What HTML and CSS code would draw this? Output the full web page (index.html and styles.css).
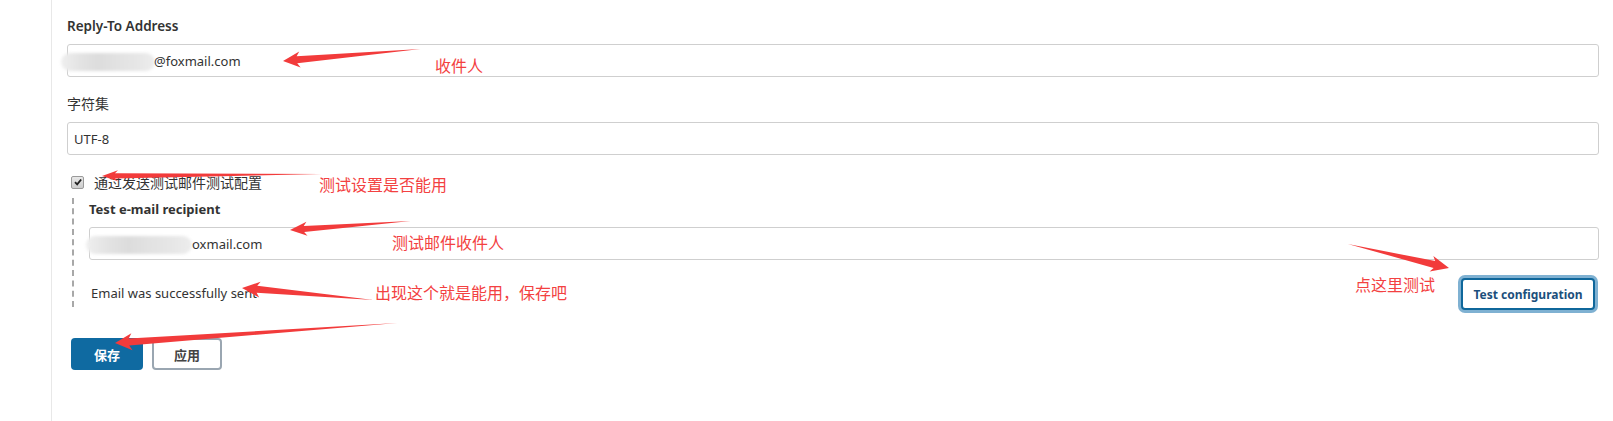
FILE: index.html
```html
<!DOCTYPE html>
<html lang="zh">
<head>
<meta charset="utf-8">
<title>Mail config</title>
<link rel="stylesheet" href="styles.css">
</head>
<body>
<div class="page">
  <aside class="sidebar"></aside>
  <main class="main">
    <div class="field">
      <div class="label">Reply-To Address</div>
      <div class="input"><span class="blur blur-a"></span><span class="val">@foxmail.com</span></div>
    </div>
    <div class="field">
      <div class="label label-cn">字符集</div>
      <div class="input"><span class="val">UTF-8</span></div>
    </div>
    <div class="check-row">
      <span class="checkbox"><svg viewBox="0 0 12 12" width="12" height="12"><path d="M2.4 6.2 L5 8.8 L9.8 3" fill="none" stroke="#222" stroke-width="2.2"/></svg></span>
      <span class="check-label">通过发送测试邮件测试配置</span>
    </div>
    <div class="nested">
      <div class="label label-bold">Test e-mail recipient</div>
      <div class="input"><span class="blur blur-b"></span><span class="val">oxmail.com</span></div>
      <div class="result-row">
        <span class="result">Email was successfully sent</span>
        <button class="btn-test">Test configuration</button>
      </div>
    </div>
    <div class="actions">
      <button class="btn btn-primary">保存</button>
      <button class="btn btn-secondary">应用</button>
    </div>
  </main>

  <div class="overlay">
    <svg class="arrows" width="1613" height="421" viewBox="0 0 1613 421">
      <g fill="#f23b3b">
        <polygon transform="translate(283 61) rotate(-5)" points="0,0 17,-8 14,-3.5 138,0 14,3.5 17,8"/>
        <polygon transform="translate(102 176) rotate(-0.5)" points="0,0 16,-5.5 13,-2.6 220,0 13,2.6 16,5.5"/>
        <polygon transform="translate(290 230) rotate(-4.3)" points="0,0 17,-7 14,-3 121,0 14,3 17,7"/>
        <polygon transform="translate(242 288) rotate(5.2)" points="0,0 18,-8 15,-3.5 132,0 15,3.5 18,8"/>
        <polygon transform="translate(115 343) rotate(-4.06)" points="0,0 17,-8.5 14,-3.5 283,0 14,3.5 17,8.5"/>
        <polygon transform="translate(1449 268) rotate(-166.6)" points="0,0 18,-8 15,-3.5 104,0 15,3.5 18,8"/>
      </g>
    </svg>
    <span class="note note-1">收件人</span>
    <span class="note note-2">测试设置是否能用</span>
    <span class="note note-3">测试邮件收件人</span>
    <span class="note note-4">出现这个就是能用，保存吧</span>
    <span class="note note-5">点这里测试</span>
  </div>
</div>
</body>
</html>
```

FILE: styles.css
```css
* { box-sizing: border-box; }

html, body {
  margin: 0;
  padding: 0;
  background: #fff;
}

body {
  font-family: "Noto Sans", "Noto Sans CJK SC", sans-serif;
  font-size: 13px;
  color: #333;
}

.page {
  position: relative;
  display: flex;
  width: 1613px;
  height: 421px;
  overflow: hidden;
}

.sidebar {
  width: 52px;
  flex: none;
  border-right: 1px solid #e8e8e8;
}

.main {
  flex: 1;
  padding: 16px 14px 0 15px;
}

.field {
  margin-bottom: 17px;
}

.label {
  font-size: 13.5px;
  line-height: 20px;
  font-weight: 600;
  color: #333;
  margin-bottom: 8px;
}

.label-cn {
  font-weight: 400;
  font-size: 14px;
}

.label-bold {
  font-size: 13px;
  font-weight: 700;
  margin-bottom: 8px;
}

.input {
  position: relative;
  height: 33px;
  border: 1px solid #cfcfcf;
  border-radius: 3px;
  display: flex;
  align-items: center;
  padding-left: 6px;
  font-size: 13px;
  color: #333;
  background: #fff;
}

.val {
  position: relative;
}

.blur {
  position: absolute;
  top: 8px;
  height: 18px;
  border-radius: 9px;
  filter: blur(1.5px);
  background: linear-gradient(90deg, #efefef 0%, #e3e3e3 20%, #dcdcdc 40%, #e2e2e2 60%, #e6e6e6 80%, #ededed 100%);
}

.blur-a {
  left: -7px;
  width: 94px;
}

.blur-a + .val {
  margin-left: 80px;
}

.blur-b {
  left: -4px;
  width: 106px;
}

.blur-b + .val {
  margin-left: 96px;
}

.check-row {
  display: flex;
  align-items: center;
  height: 20px;
  margin-top: 17px;
  padding-left: 4px;
}

.checkbox {
  width: 13px;
  height: 13px;
  border: 1px solid #9a9a9a;
  border-radius: 2px;
  background: linear-gradient(#e8e8e8, #cdcdcd);
  display: flex;
  align-items: center;
  justify-content: center;
}

.checkbox svg {
  width: 10px;
  height: 10px;
}

.check-label {
  margin-left: 10px;
  font-size: 14px;
  color: #333;
}

.nested {
  margin-top: 6px;
  margin-left: 5px;
  padding: 1px 0 0 15px;
  border-left: 2px dashed #a8a8a8;
  height: 109px;
}

.result-row {
  display: flex;
  align-items: center;
  justify-content: space-between;
  margin-top: 15px;
  padding-right: 4px;
}

.result {
  font-size: 13px;
  color: #333;
  margin-left: 2px;
}

.btn-test {
  width: 134px;
  height: 32px;
  padding: 0;
  font-family: inherit;
  font-size: 12px;
  font-weight: 700;
  color: #1b4f7c;
  background: #fff;
  border: 2px solid #0f679b;
  border-radius: 4px;
  box-shadow: 0 0 0 3px #7fb1d2;
  margin-top: 3px;
}

.actions {
  display: flex;
  gap: 9px;
  margin-top: 31px;
  padding-left: 4px;
}

.btn {
  height: 32px;
  border-radius: 4px;
  font-family: inherit;
  font-size: 13px;
  font-weight: 700;
}

.btn-primary {
  width: 72px;
  background: #0f6aa1;
  border: 0;
  color: #fff;
}

.btn-secondary {
  width: 70px;
  background: #fff;
  border: 2px solid #9aa6b1;
  color: #444;
}

.overlay {
  position: absolute;
  left: 0;
  top: 0;
  width: 1613px;
  height: 421px;
  pointer-events: none;
}

.arrows {
  position: absolute;
  left: 0;
  top: 0;
}

.note {
  position: absolute;
  font-family: "Noto Sans CJK SC", sans-serif;
  font-size: 16px;
  line-height: 16px;
  color: #f34141;
  white-space: nowrap;
}

.note-1 { left: 435px; top: 57px; }
.note-2 { left: 319px; top: 176px; }
.note-3 { left: 392px; top: 234px; }
.note-4 { left: 375px; top: 284px; }
.note-5 { left: 1355px; top: 276px; }
```
